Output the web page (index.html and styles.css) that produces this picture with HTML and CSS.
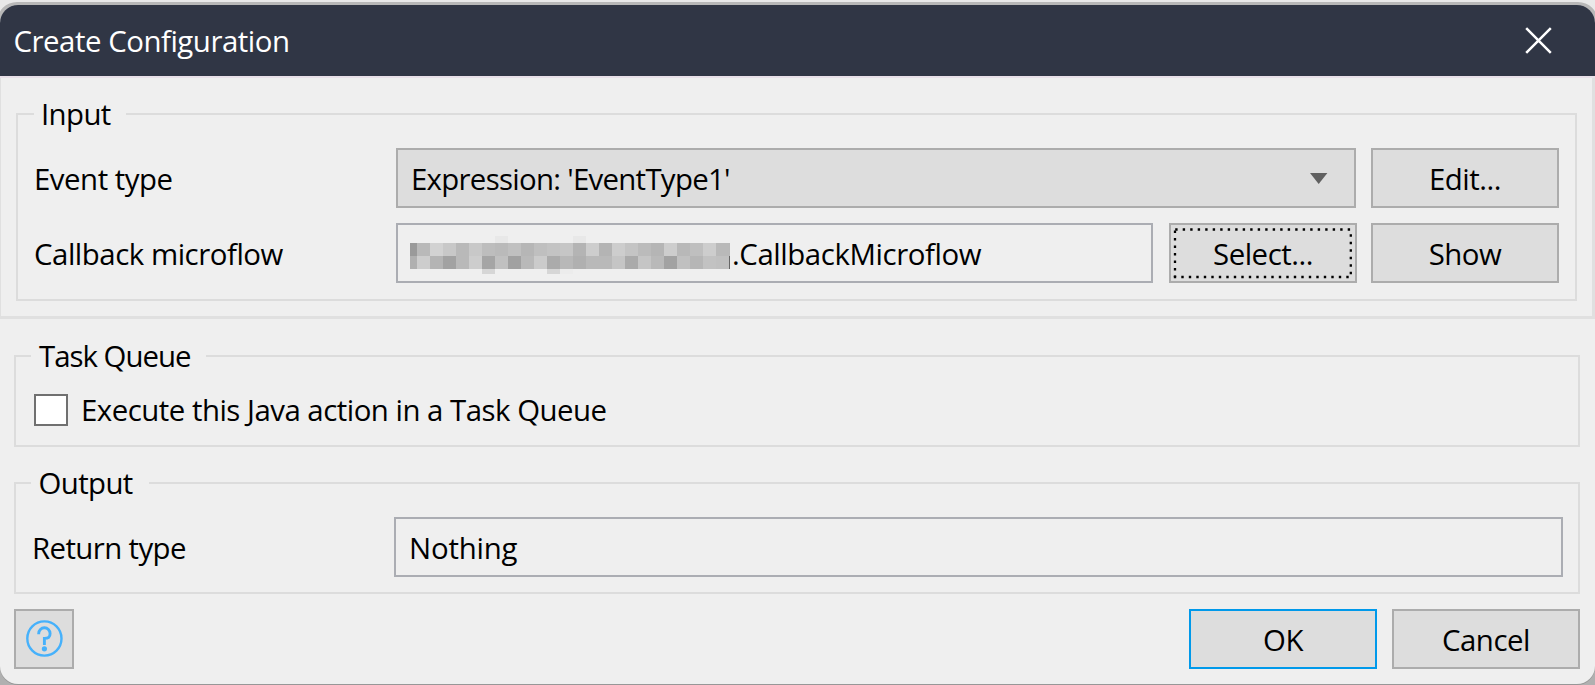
FILE: index.html
```html
<!DOCTYPE html>
<html lang="en">
<head>
<meta charset="utf-8">
<title>Create Configuration</title>
<link rel="stylesheet" href="styles.css">
</head>
<body>
<div class="dialog">
  <header class="titlebar">
    <h1 class="title">Create Configuration</h1>
    <svg class="close" width="27" height="27" viewBox="0 0 27 27"><path d="M1.2 1.2 25.8 25.8M25.8 1.2 1.2 25.8" stroke="#fff" stroke-width="2.5" fill="none"/></svg>
  </header>
  <section class="panel">
    <fieldset class="group group-input">
      <legend class="legend legend-input">Input</legend>
      <div class="row">
        <span class="label">Event type</span>
        <div class="combo"><span class="expression">Expression: 'EventType1'</span><svg width="18" height="11" viewBox="0 0 18 11"><path d="M0 0H17.4L8.7 11Z" fill="#606060"/></svg></div>
        <button class="btn">Edit...</button>
      </div>
      <div class="row">
        <span class="label">Callback microflow</span>
        <div class="field field-callback">
          <svg class="mosaic" id="mosaic" width="320" height="38" viewBox="0 0 320 38" shape-rendering="crispEdges"></svg>
          <span class="callback">.CallbackMicroflow</span>
        </div>
        <button class="btn btn-select">Select...<svg class="focus" width="180" height="51" viewBox="0 0 180 51"><path d="M2.2 1.5H178"/><path d="M.8 49H178"/><path d="M2 2.5V49"/><path d="M177.8 6.3V47"/></svg></button>
        <button class="btn">Show</button>
      </div>
    </fieldset>
  </section>
  <fieldset class="group group-task">
    <legend class="legend legend-task">Task Queue</legend>
    <label class="check"><span class="box"></span><span class="check-text">Execute this Java action in a Task Queue</span></label>
  </fieldset>
  <fieldset class="group group-output">
    <legend class="legend legend-output">Output</legend>
    <div class="row">
      <span class="label label-return">Return type</span>
      <div class="field nothing">Nothing</div>
    </div>
  </fieldset>
  <footer class="footer">
    <button class="btn btn-help" aria-label="Help"><svg width="38" height="38" viewBox="0 0 38 38" fill="none" stroke="#46b1fb"><circle cx="19.4" cy="18.5" r="17.1" stroke-width="2.4"/><path d="M13.7 14.2V13.5a5.7 5.7 0 0 1 11.4 0C25.1 17.1 23.4 18.4 19.4 18.4V24.9" stroke-width="2.9"/><circle cx="19.4" cy="28.8" r="2.6" fill="#46b1fb" stroke="none"/></svg></button>
    <button class="btn btn-ok">OK</button>
    <button class="btn">Cancel</button>
  </footer>
</div>
<script src="mosaic.js"></script>
</body>
</html>
```
FILE: styles.css
```css
* { box-sizing: border-box; }

body {
  margin: 0;
  height: 685px;
  overflow: hidden;
  padding-top: 5px;
  background: linear-gradient(#e9e9e9 0 2px, #b8b8b8 2px 30px, #c6c6c6 30px 600px, #b0b0b0 600px);
  position: relative;
  font: 29.4px/40px "Open Sans", "Noto Sans", sans-serif;
  letter-spacing: -0.47px;
  color: #000;
}

body::before {
  content: "";
  position: absolute;
  inset: 0;
  background: #e9e9e9;
  clip-path: path(evenodd, "M0 0H1595V685H0ZM-3 22A20 20 0 0 1 17 2H1578A20 20 0 0 1 1598 22V685H-3Z");
}

.dialog {
  position: relative;
  height: 679px;
  background: #efefef;
  border-radius: 18px;
  overflow: hidden;
  box-shadow: 0 1px 0 #979797;
}

.titlebar {
  display: flex;
  align-items: center;
  justify-content: space-between;
  height: 73px;
  padding: 0 43px 0 13.5px;
  background: #303645;
  border-bottom: 2px solid #e8e0e8;
}

.title {
  margin: 1px 0 0;
  font-size: inherit;
  font-weight: 400;
  color: #fff;
}

.close { margin-bottom: 1px; }

.panel {
  height: 241px;
  padding: 16px 15px 0;
  border: solid #e0e0e0;
  border-width: 0 3px 3px 1px;
}

.group {
  min-width: 0;
  margin: 0;
  border: 2px solid #dcdcdc;
  padding: 14px 15px 0 16px;
}

.group-input { height: 207px; padding-right: 16px; }
.group-task { height: 111px; margin: 17px 15px 0 14px; padding-left: 18px; }
.group-output { height: 131px; margin: 16px 15px 0 14px; }

.legend { height: 40px; padding: 0 0 0 7px; white-space: nowrap; }
.legend-input { width: 92px; letter-spacing: -0.6px; }
.legend-task { width: 175px; margin-left: -3px; padding-left: 8px; letter-spacing: -1px; }
.legend-output { width: 118px; margin-left: -1px; padding-left: 7.5px; letter-spacing: -0.6px; }

.row { display: flex; height: 60px; }
.row + .row { margin-top: 15px; }

.label { width: 362px; line-height: 63px; white-space: nowrap; }
.label-return { letter-spacing: -0.6px; }

.combo, .field {
  display: flex;
  align-items: center;
  height: 60px;
  border: 2px solid #acacac;
  padding: 1px 0 0 13px;
  white-space: nowrap;
}

.combo {
  width: 960px;
  margin-right: 15px;
  padding-right: 26px;
  justify-content: space-between;
  background: #ddd;
}

.expression { letter-spacing: -0.71px; }

.field { border-color: #abadb3; }
.field-callback { width: 757px; margin-right: 16px; padding-left: 12px; }
.mosaic { margin-top: 2px; margin-right: 2px; }
.callback { letter-spacing: -0.42px; }
.nothing { flex: 1; letter-spacing: -0.2px; }

.btn {
  position: relative;
  width: 188px;
  height: 60px;
  padding: 1px 0 0;
  border: 2px solid #acacac;
  border-radius: 0;
  background: #ddd;
  color: inherit;
  font: inherit;
  letter-spacing: inherit;
}

.btn-select { margin-right: 14px; }

.focus {
  position: absolute;
  left: 2px;
  top: 3px;
  fill: none;
  stroke: #000;
  stroke-width: 2.3;
  stroke-dasharray: 2.4 5.1;
}

.check { display: flex; align-items: center; height: 40px; white-space: nowrap; }
.check-text { letter-spacing: -0.5px; }

.box {
  width: 34px;
  height: 32px;
  margin-right: 13px;
  border: 2px solid #707070;
  background: #fff;
}

.footer { display: flex; gap: 15px; margin: 15px 15px 0 14px; }
.btn-help { display: grid; place-items: center; width: 60px; margin-right: auto; padding: 0; }
.btn-ok { border-color: #0099ea; }
```
FILE: mosaic.js
```javascript
// Pixelated cover over the module name: two full rows plus a few stray cells.
const CELL = 13;
const rows = [
  "9a b9 d2 c8 b9 c8 bd ba c0 b6 bf c3 c6 b4 cd b4 cd c4 bb b5 cd b8 bf cd b9",
  "b0 cd b4 a2 b9 cd a5 c0 a1 b9 cb ab b8 b0 b9 b9 c5 aa c5 b9 a2 c0 b6 c2 c0"
];
const strays = [
  [85, 0, 13, 7, "e8"], [163, 0, 13, 7, "e8"],
  [72, 33, 13, 5, "d6"], [137, 33, 13, 5, "d6"], [150, 33, 13, 5, "ec"],
  [319, 7, 1, 13, "b8"], [319, 20, 1, 13, "66"]
];
const svg = document.getElementById("mosaic");

function cell(x, y, w, h, tone) {
  const rect = document.createElementNS("http://www.w3.org/2000/svg", "rect");
  rect.setAttribute("x", x);
  rect.setAttribute("y", y);
  rect.setAttribute("width", w);
  rect.setAttribute("height", h);
  rect.setAttribute("fill", "#" + tone.repeat(3));
  svg.appendChild(rect);
}

rows.forEach((row, r) => row.split(" ").forEach((tone, i) => {
  cell(i ? 7 + (i - 1) * CELL : 0, 7 + r * CELL, i ? CELL : 7, CELL, tone);
}));
strays.forEach(s => cell(...s));
```
